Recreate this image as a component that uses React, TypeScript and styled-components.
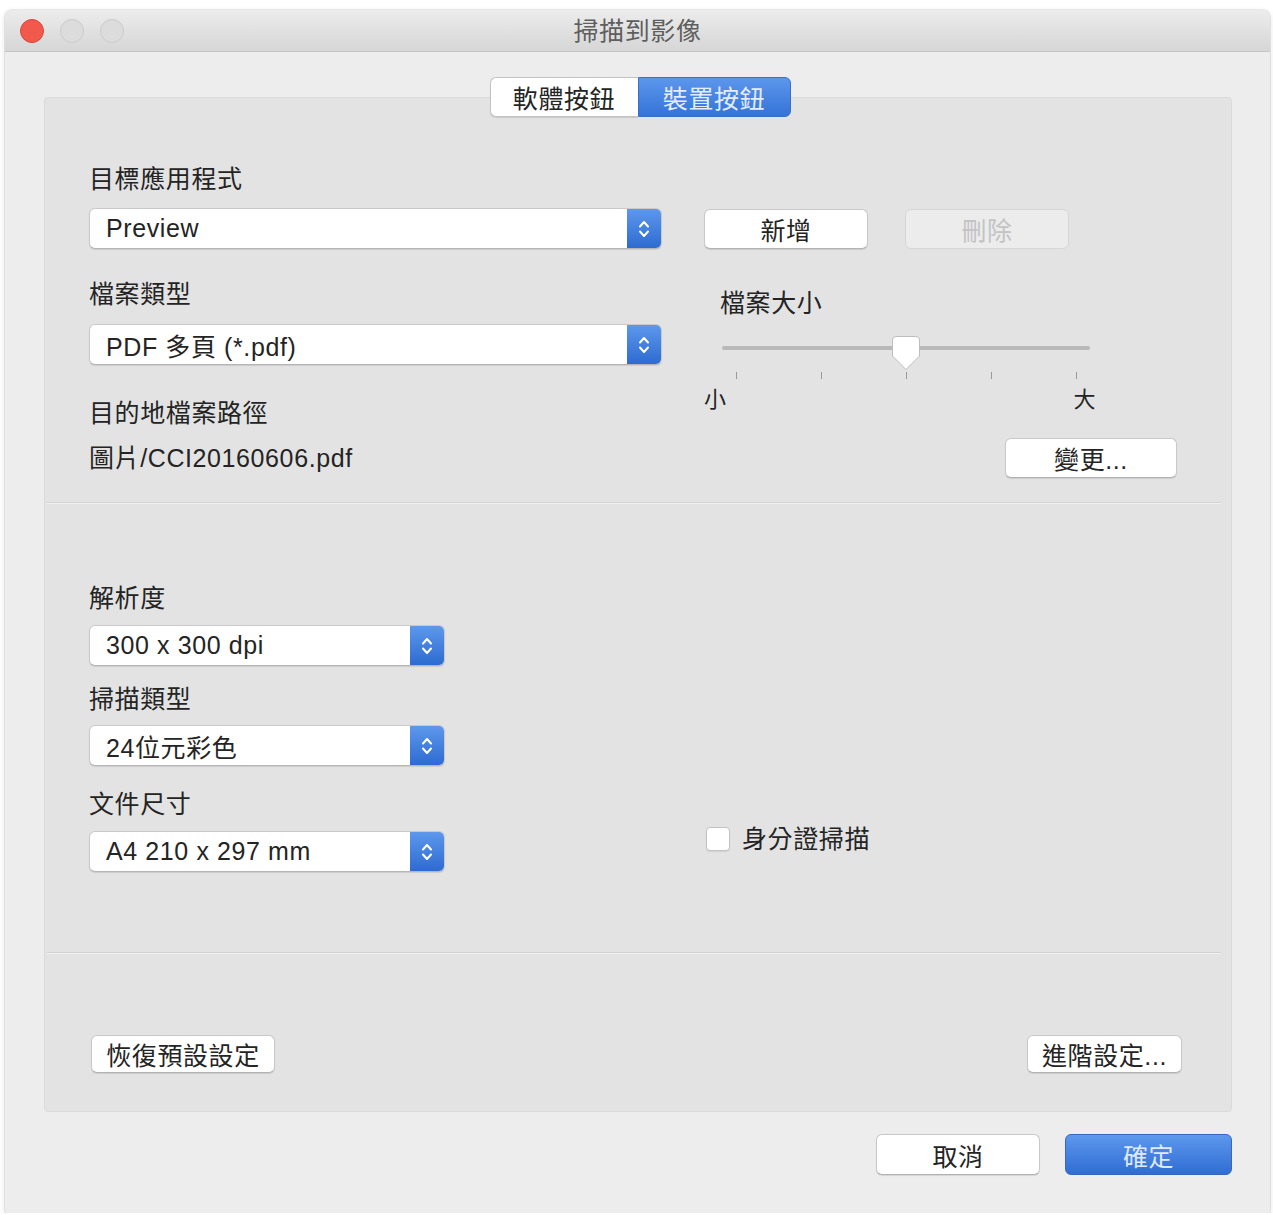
import React from "react";
import styled, { createGlobalStyle, css } from "styled-components";

const Global = createGlobalStyle`
  html, body { margin: 0; padding: 0; background: #ffffff; }
  body {
    font-family: "Liberation Sans", "Noto Sans CJK TC", sans-serif;
    color: #242424;
    letter-spacing: 0.6px;
  }
  * { box-sizing: border-box; }
`;

const Window = styled.div`
  margin: 10px 0 0 5px;
  width: 1265px;
  height: 1203px;
  display: flex;
  flex-direction: column;
  background: #ededed;
  border-radius: 7px 7px 3px 3px;
  box-shadow: 0 0 0 1px rgba(0, 0, 0, 0.07), 0 2px 6px rgba(0, 0, 0, 0.12);
  overflow: hidden;
`;

const TitleBar = styled.div`
  flex: none;
  height: 42px;
  display: grid;
  grid-template-columns: 1fr auto 1fr;
  align-items: center;
  background: linear-gradient(#ececec, #d6d6d6);
  border-bottom: 1px solid #c6c6c6;
`;

const Lights = styled.div`
  display: flex;
  gap: 16px;
  padding-left: 15px;
`;

const Light = styled.span<{ $color: string; $border: string }>`
  width: 24px;
  height: 24px;
  border-radius: 50%;
  background: ${(p) => p.$color};
  border: 1px solid ${(p) => p.$border};
`;

const Title = styled.div`
  font-size: 25px;
  line-height: 30px;
  color: #5e5e5e;
`;

const Body = styled.div`
  flex: 1;
  display: flex;
  flex-direction: column;
  padding: 25px 38px 0 39px;
`;

const TabsRow = styled.div`
  display: flex;
  justify-content: center;
  margin-bottom: -20px;
  position: relative;
  z-index: 1;
  padding-left: 4px;
`;

const Tab = styled.div<{ $active?: boolean; $w: number }>`
  width: ${(p) => p.$w}px;
  height: 40px;
  display: flex;
  align-items: center;
  justify-content: center;
  font-size: 25px;
  ${(p) =>
    p.$active
      ? css`
          background: linear-gradient(#5c97ec, #3473d8);
          color: #e3ecfb;
          border: 1px solid #3a6fc4;
          border-radius: 0 6px 6px 0;
        `
      : css`
          background: #ffffff;
          color: #242424;
          border: 1px solid #c4c4c4;
          border-right: none;
          border-radius: 6px 0 0 6px;
          box-shadow: 0 1px 1px rgba(0, 0, 0, 0.12);
        `}
`;

const Panel = styled.div`
  height: 1015px;
  display: flex;
  flex-direction: column;
  background: #e3e3e3;
  border: 1px solid #dadada;
  border-radius: 4px;
`;

const Section = styled.div<{ $pt: number; $pb: number; $align?: string }>`
  display: flex;
  align-items: ${(p) => p.$align || "flex-start"};
  padding: ${(p) => p.$pt}px 50px ${(p) => p.$pb}px 44px;
`;

const Separator = styled.div`
  height: 1px;
  background: #d2d2d2;
  margin: 0 10px 0 2px;
  box-shadow: 0 1px 0 rgba(255, 255, 255, 0.5);
`;

const Column = styled.div<{ $w: number; $ml?: number }>`
  width: ${(p) => p.$w}px;
  margin-left: ${(p) => p.$ml || 0}px;
  display: flex;
  flex-direction: column;
  align-items: flex-start;
`;

const Label = styled.div<{ $mt?: number; $ml?: number }>`
  font-size: 25px;
  line-height: 28px;
  color: #242424;
  margin-top: ${(p) => p.$mt || 0}px;
  margin-left: ${(p) => p.$ml || 0}px;
  white-space: nowrap;
`;

const PopupBox = styled.div<{ $w: number; $mt: number }>`
  width: ${(p) => p.$w}px;
  height: 41px;
  margin-top: ${(p) => p.$mt}px;
  display: flex;
  background: #ffffff;
  border: 1px solid #c9c9c9;
  border-bottom-color: #b5b5b5;
  border-radius: 6px;
  box-shadow: 0 1px 1px rgba(0, 0, 0, 0.1);
  overflow: hidden;
`;

const PopupValue = styled.div`
  flex: 1;
  display: flex;
  align-items: center;
  padding-left: 16px;
  font-size: 25px;
  color: #242424;
`;

const Stepper = styled.div`
  width: 34px;
  display: flex;
  align-items: center;
  justify-content: center;
  background: linear-gradient(#5d98ec, #2d6bd1);
`;

const Button = styled.div<{ $w: number; $h?: number; $mt?: number; $variant?: "disabled" | "primary" }>`
  width: ${(p) => p.$w}px;
  height: ${(p) => p.$h || 40}px;
  margin-top: ${(p) => p.$mt || 0}px;
  display: flex;
  align-items: center;
  justify-content: center;
  font-size: 25px;
  border-radius: 6px;
  white-space: nowrap;
  ${(p) =>
    p.$variant === "primary"
      ? css`
          background: linear-gradient(#5d98ed, #2f6dd3);
          border: 1px solid #3567bd;
          color: #dfe9fb;
        `
      : p.$variant === "disabled"
      ? css`
          background: #ececec;
          border: 1px solid #d6d6d6;
          color: #c3c3c3;
        `
      : css`
          background: #ffffff;
          border: 1px solid #c8c8c8;
          border-bottom-color: #b2b2b2;
          color: #242424;
          box-shadow: 0 1px 1px rgba(0, 0, 0, 0.1);
        `}
`;

const ButtonRow = styled.div<{ $mt?: number; $gap: number; $end?: boolean }>`
  display: flex;
  gap: ${(p) => p.$gap}px;
  margin-top: ${(p) => p.$mt || 0}px;
  align-self: ${(p) => (p.$end ? "flex-end" : "flex-start")};
`;

const SliderArea = styled.div`
  position: relative;
  width: 368px;
  height: 36px;
  margin: 18px 0 0 18px;
`;

const Track = styled.div`
  position: absolute;
  left: 0;
  right: 0;
  top: 11px;
  height: 4px;
  border-radius: 2px;
  background: #b9b9b9;
`;

const Thumb = styled.svg`
  position: absolute;
  left: 50%;
  top: 0;
  transform: translateX(-50%);
`;

const Ticks = styled.div`
  width: 368px;
  margin: 1px 0 0 18px;
  padding: 0 13px 0 14px;
  display: flex;
  justify-content: space-between;
`;

const Tick = styled.span`
  width: 1px;
  height: 7px;
  background: #9a9a9a;
`;

const TickLabels = styled.div`
  width: 392px;
  margin-top: 9px;
  display: flex;
  justify-content: space-between;
  font-size: 22px;
  line-height: 24px;
  color: #242424;
`;

const PathText = styled.div`
  margin-top: 17px;
  font-size: 25px;
  line-height: 28px;
  color: #242424;
`;

const CheckRow = styled.div`
  display: flex;
  align-items: center;
  gap: 12px;
  margin-bottom: 19px;
  font-size: 25px;
  line-height: 28px;
`;

const CheckBox = styled.span`
  width: 24px;
  height: 24px;
  background: #ffffff;
  border: 1px solid #c2c2c2;
  border-radius: 4px;
  box-shadow: 0 1px 1px rgba(0, 0, 0, 0.08);
`;

const BottomBar = styled.div`
  display: flex;
  justify-content: space-between;
  padding: 82px 49px 0 46px;
`;

const Footer = styled.div`
  display: flex;
  justify-content: flex-end;
  gap: 25px;
  margin-top: 22px;
`;

const StepIcon = () => (
  <svg width="14" height="22" viewBox="0 0 14 22" fill="none">
    <path d="M3 8.5 L7 4 L11 8.5" stroke="#fff" strokeWidth="2" strokeLinecap="round" strokeLinejoin="round" />
    <path d="M3 13.5 L7 18 L11 13.5" stroke="#fff" strokeWidth="2" strokeLinecap="round" strokeLinejoin="round" />
  </svg>
);

const Popup = ({ w, mt, value }: { w: number; mt: number; value: string }) => (
  <PopupBox $w={w} $mt={mt}>
    <PopupValue>{value}</PopupValue>
    <Stepper>
      <StepIcon />
    </Stepper>
  </PopupBox>
);

export default function App() {
  return (
    <>
      <Global />
      <Window>
        <TitleBar>
          <Lights>
            <Light $color="#f0594c" $border="#d9463b" />
            <Light $color="#dcdcdc" $border="#cbcbcb" />
            <Light $color="#dcdcdc" $border="#cbcbcb" />
          </Lights>
          <Title>掃描到影像</Title>
          <div />
        </TitleBar>
        <Body>
          <TabsRow>
            <Tab $w={148}>軟體按鈕</Tab>
            <Tab $w={153} $active>
              裝置按鈕
            </Tab>
          </TabsRow>
          <Panel>
            <Section $pt={67} $pb={24}>
              <Column $w={573}>
                <Label>目標應用程式</Label>
                <Popup w={573} mt={15} value="Preview" />
                <Label $mt={31}>檔案類型</Label>
                <Popup w={573} mt={16} value="PDF 多頁 (*.pdf)" />
                <Label $mt={34}>目的地檔案路徑</Label>
                <PathText>圖片/CCI20160606.pdf</PathText>
              </Column>
              <Column $w={473} $ml={42}>
                <ButtonRow $mt={44} $gap={37}>
                  <Button $w={164}>新增</Button>
                  <Button $w={164} $variant="disabled">
                    刪除
                  </Button>
                </ButtonRow>
                <Label $mt={40} $ml={16}>
                  檔案大小
                </Label>
                <SliderArea>
                  <Track />
                  <Thumb width="30" height="36" viewBox="0 0 30 36">
                    <path
                      d="M5 1.5 H25 Q28.5 1.5 28.5 5 V21 L15 34.5 L1.5 21 V5 Q1.5 1.5 5 1.5 Z"
                      fill="#ffffff"
                      stroke="#bdbdbd"
                      strokeWidth="1"
                    />
                  </Thumb>
                </SliderArea>
                <Ticks>
                  <Tick />
                  <Tick />
                  <Tick />
                  <Tick />
                  <Tick />
                </Ticks>
                <TickLabels>
                  <span>小</span>
                  <span>大</span>
                </TickLabels>
                <ButtonRow $mt={26} $gap={0} $end>
                  <Button $w={172}>變更...</Button>
                </ButtonRow>
              </Column>
            </Section>
            <Separator />
            <Section $pt={81} $pb={80} $align="flex-end">
              <Column $w={573}>
                <Label>解析度</Label>
                <Popup w={356} mt={13} value="300 x 300 dpi" />
                <Label $mt={19}>掃描類型</Label>
                <Popup w={356} mt={12} value="24位元彩色" />
                <Label $mt={24}>文件尺寸</Label>
                <Popup w={356} mt={13} value="A4 210 x 297 mm" />
              </Column>
              <Column $w={400} $ml={44}>
                <CheckRow>
                  <CheckBox />
                  <span>身分證掃描</span>
                </CheckRow>
              </Column>
            </Section>
            <Separator />
            <BottomBar>
              <Button $w={184} $h={38}>
                恢復預設設定
              </Button>
              <Button $w={155} $h={38}>
                進階設定...
              </Button>
            </BottomBar>
          </Panel>
          <Footer>
            <Button $w={164} $h={41}>
              取消
            </Button>
            <Button $w={167} $h={41} $variant="primary">
              確定
            </Button>
          </Footer>
        </Body>
      </Window>
    </>
  );
}
